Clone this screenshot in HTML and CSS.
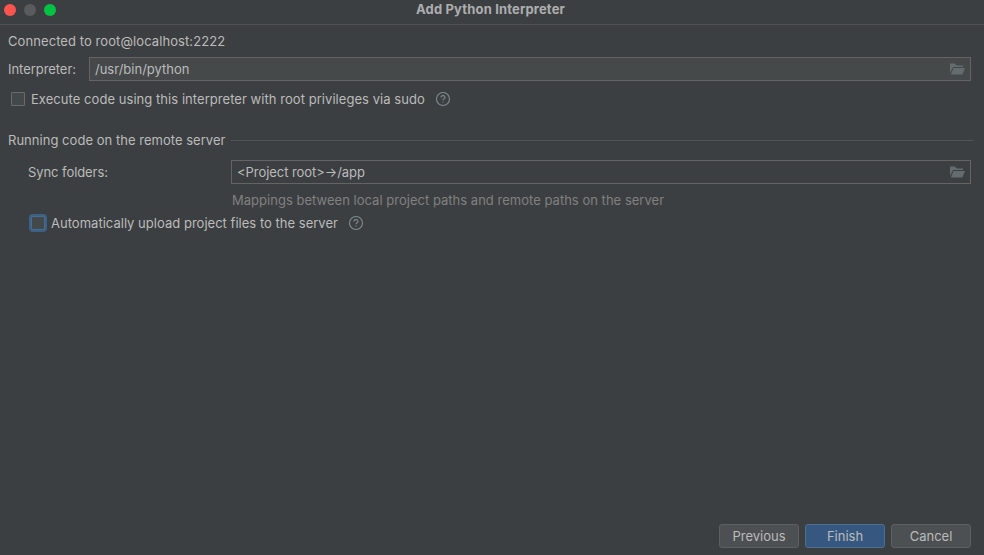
FILE: index.html
```html
<!DOCTYPE html>
<html lang="en">
<head>
<meta charset="utf-8">
<title>Add Python Interpreter</title>
<link rel="stylesheet" href="styles.css">
</head>
<body>
<div class="dialog">
  <header class="titlebar">
    <div class="lights"><i class="light close"></i><i class="light minimize"></i><i class="light expand"></i></div>
    <h1 class="title">Add Python Interpreter</h1>
  </header>
  <main class="content">
    <div class="status"><span class="connected">Connected to root@localhost:2222</span></div>
    <div class="row interpreter">
      <label class="label">Interpreter:</label>
      <div class="field filled"><span class="path">/usr/bin/python</span>
        <svg class="folder" width="15" height="12" viewBox="0 0 15 12"><path d="M0 10V0.500h5l1.500 2H13v1.500H3z"/><path d="M3.600 5H15l-2.600 6.500H.8z"/></svg>
      </div>
    </div>
    <div class="row check sudo">
      <span class="box"></span><span class="check-label">Execute code using this interpreter with root privileges via sudo</span>
      <svg class="help" width="16" height="16" viewBox="0 0 16 16"><circle cx="8" cy="8" r="6.5"/><path d="M6 6.5C6 5.3 6.8 4.6 8 4.6s2 .7 2 1.8C10 7.7 8 7.7 8 9.2"/><path d="M8 10.4v1.2"/></svg>
    </div>
    <div class="row section"><h2 class="section-title">Running code on the remote server</h2><span class="rule"></span></div>
    <div class="row sync">
      <label class="label">Sync folders:</label>
      <div class="field"><span class="mapping">&lt;Project root&gt;→/app</span>
        <svg class="folder" width="15" height="12" viewBox="0 0 15 12"><path d="M0 10V0.500h5l1.500 2H13v1.500H3z"/><path d="M3.600 5H15l-2.600 6.500H.8z"/></svg>
      </div>
    </div>
    <div class="hint"><span class="hint-text">Mappings between local project paths and remote paths on the server</span></div>
    <div class="row check upload">
      <span class="box focused"></span><span class="check-label">Automatically upload project files to the server</span>
      <svg class="help" width="16" height="16" viewBox="0 0 16 16"><circle cx="8" cy="8" r="6.5"/><path d="M6 6.5C6 5.3 6.8 4.6 8 4.6s2 .7 2 1.8C10 7.7 8 7.7 8 9.2"/><path d="M8 10.4v1.2"/></svg>
    </div>
  </main>
  <footer class="actions">
    <button class="button">Previous</button><button class="button primary">Finish</button><button class="button">Cancel</button>
  </footer>
</div>
</body>
</html>
```
FILE: styles.css
```css
* { box-sizing: border-box; }
body {
  margin: 0;
  background: #3c3f41;
  color: #bbbbbb;
  font: 13px/16px Inter, "Liberation Sans", sans-serif;
}
.dialog { height: 555px; display: flex; flex-direction: column; overflow: hidden; }
.titlebar {
  height: 25px;
  border-bottom: 1px solid #515151;
  display: grid;
  grid-template-columns: 60px 1fr 60px;
  padding-top: 1px;
}
.lights { display: flex; gap: 8px; padding: 3px 0 0 4px; }
.light { width: 12px; height: 12px; border-radius: 50%; }
.close { background: #ff544d; }
.minimize { background: #5a5b5d; }
.expand { background: #00c344; }
.title { margin: 0; padding-right: 3px; text-align: center; font-size: 13px; line-height: 16px; font-weight: 700; letter-spacing: 0.16px; color: #adaeaf; }
.content { flex: 1; padding: 8px 13px 0 8px; white-space: nowrap; }
.status { height: 24px; letter-spacing: 0.08px; }
.row { display: flex; align-items: center; }
.interpreter .label { width: 81px; letter-spacing: -0.05px; }
.field {
  flex: 1;
  height: 24px;
  border: 1px solid #646464;
  padding: 0 5px;
  display: flex;
  align-items: center;
  justify-content: space-between;
}
.filled { background: #45494a; }
.mapping { letter-spacing: -0.05px; }
.folder { fill: #646c70; }
.check { height: 16px; }
.sudo { margin: 10px 0 0 3px; letter-spacing: 0.05px; }
.box { width: 14px; height: 14px; border: 1px solid #6b6b6b; border-radius: 1px; background: #43494a; margin-right: 6px; }
.focused { border-color: #466d94; border-radius: 2px; box-shadow: 0 0 0 2px #3d6185; }
.help { margin-left: 10px; fill: none; stroke: #7f8b91; stroke-width: 1.1; }
.section { margin: 25px -3px 0 0; height: 16px; }
.section-title { margin: 0; font: inherit; width: 223px; letter-spacing: 0.03px; }
.rule { flex: 1; height: 1px; background: #515355; }
.sync { margin: 12px 0 0 20px; }
.sync .label { width: 203px; letter-spacing: -0.07px; }
.hint { margin: 8px 0 0 224px; color: #808080; height: 16px; letter-spacing: 0.02px; }
.upload { margin: 7px 0 0 23px; letter-spacing: 0.02px; }
.actions { display: flex; justify-content: flex-end; gap: 6px; padding: 0 13px 7px 0; }
.button {
  width: 80px;
  height: 24px;
  padding: 0;
  border: 1px solid #5e6060;
  border-radius: 3px;
  background: #4c5052;
  color: #bbbbbb;
  font: inherit;
}
.primary { background: #365880; border-color: #4c708c; }
```
